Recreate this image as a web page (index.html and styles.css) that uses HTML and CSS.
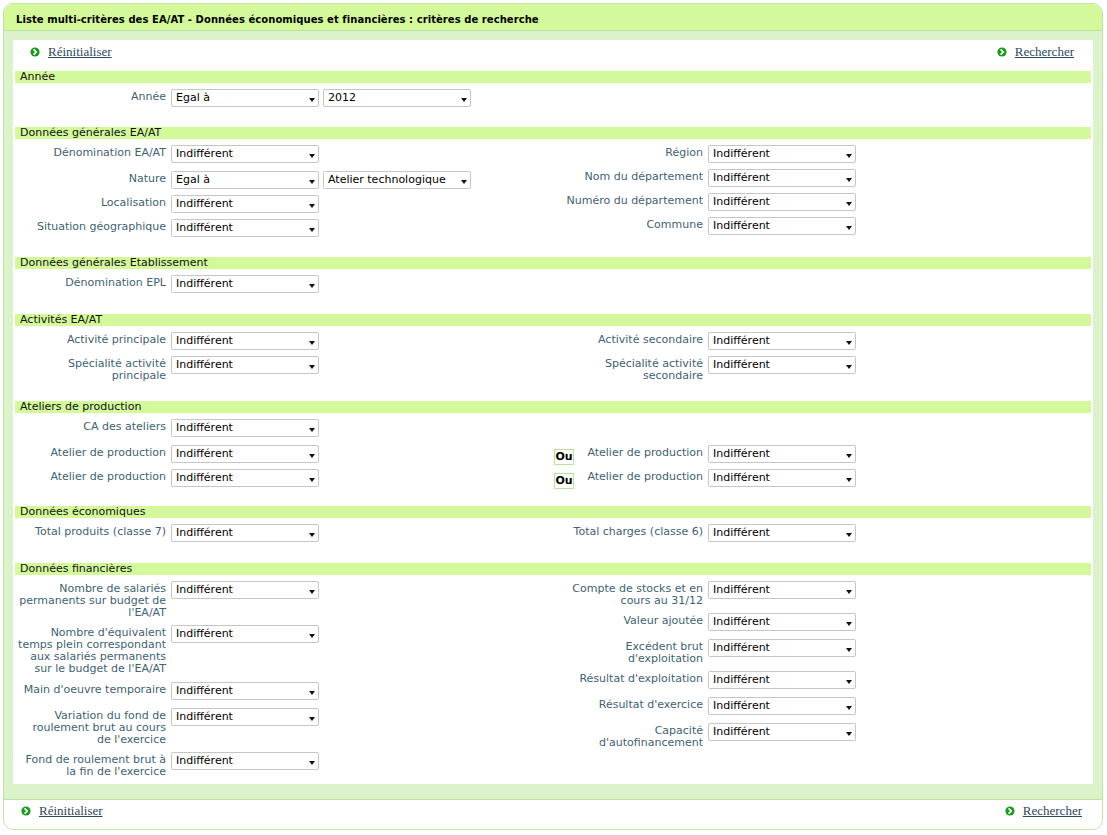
FILE: index.html
```html
<!DOCTYPE html>
<html lang="fr">
<head>
<meta charset="utf-8">
<title>Liste multi-critères des EA/AT</title>
<link rel="stylesheet" href="styles.css">
</head>
<body>
<div class="box">
  <div class="box-title">Liste multi-critères des EA/AT - Données économiques et financières : critères de recherche</div>
  <div class="box-body">
    <div class="panel">
      <div class="actions">
        <a class="action" href="#"><svg class="go" viewBox="0 0 10 10" width="10" height="10"><circle cx="5" cy="5" r="4.6" fill="#1a9a1c"/><path d="M3.6 2.4 L6.2 5 L3.6 7.6" fill="none" stroke="#fff" stroke-width="1.7"/></svg><span>Réinitialiser</span></a>
        <a class="action" href="#"><svg class="go" viewBox="0 0 10 10" width="10" height="10"><circle cx="5" cy="5" r="4.6" fill="#1a9a1c"/><path d="M3.6 2.4 L6.2 5 L3.6 7.6" fill="none" stroke="#fff" stroke-width="1.7"/></svg><span>Rechercher</span></a>
      </div>

      <section class="group">
        <h2 class="group-title">Année</h2>
        <div class="group-body">
          <div class="col">
            <div class="row"><label class="lbl">Année</label><div class="sel">Egal à</div><div class="sel">2012</div></div>
          </div>
        </div>
      </section>

      <section class="group">
        <h2 class="group-title">Données générales EA/AT</h2>
        <div class="group-body">
          <div class="col">
            <div class="row row--loose"><label class="lbl">Dénomination EA/AT</label><div class="sel">Indifférent</div></div>
            <div class="row"><label class="lbl">Nature</label><div class="sel">Egal à</div><div class="sel">Atelier technologique</div></div>
            <div class="row"><label class="lbl">Localisation</label><div class="sel">Indifférent</div></div>
            <div class="row"><label class="lbl">Situation géographique</label><div class="sel">Indifférent</div></div>
          </div>
          <div class="col">
            <div class="row"><label class="lbl">Région</label><div class="sel">Indifférent</div></div>
            <div class="row"><label class="lbl">Nom du département</label><div class="sel">Indifférent</div></div>
            <div class="row"><label class="lbl">Numéro du département</label><div class="sel">Indifférent</div></div>
            <div class="row"><label class="lbl">Commune</label><div class="sel">Indifférent</div></div>
          </div>
        </div>
      </section>

      <section class="group group--wide">
        <h2 class="group-title">Données générales Etablissement</h2>
        <div class="group-body">
          <div class="col">
            <div class="row"><label class="lbl">Dénomination EPL</label><div class="sel">Indifférent</div></div>
          </div>
        </div>
      </section>

      <section class="group group--tight">
        <h2 class="group-title">Activités EA/AT</h2>
        <div class="group-body">
          <div class="col">
            <div class="row"><label class="lbl">Activité principale</label><div class="sel">Indifférent</div></div>
            <div class="row"><label class="lbl">Spécialité activité principale</label><div class="sel">Indifférent</div></div>
          </div>
          <div class="col">
            <div class="row"><label class="lbl">Activité secondaire</label><div class="sel">Indifférent</div></div>
            <div class="row"><label class="lbl">Spécialité activité secondaire</label><div class="sel">Indifférent</div></div>
          </div>
        </div>
      </section>

      <section class="group group--tight">
        <h2 class="group-title">Ateliers de production</h2>
        <div class="group-body">
          <div class="col">
            <div class="row row--loose"><label class="lbl">CA des ateliers</label><div class="sel">Indifférent</div></div>
            <div class="row"><label class="lbl">Atelier de production</label><div class="sel">Indifférent</div></div>
            <div class="row"><label class="lbl">Atelier de production</label><div class="sel">Indifférent</div></div>
          </div>
          <div class="col">
            <div class="row row--blank"></div>
            <div class="row"><label class="lbl lbl--ou"><span class="ou">Ou</span><span class="lbl-text">Atelier de production</span></label><div class="sel">Indifférent</div></div>
            <div class="row"><label class="lbl lbl--ou"><span class="ou">Ou</span><span class="lbl-text">Atelier de production</span></label><div class="sel">Indifférent</div></div>
          </div>
        </div>
      </section>

      <section class="group group--wide">
        <h2 class="group-title">Données économiques</h2>
        <div class="group-body">
          <div class="col">
            <div class="row"><label class="lbl">Total produits (classe 7)</label><div class="sel">Indifférent</div></div>
          </div>
          <div class="col">
            <div class="row"><label class="lbl">Total charges (classe 6)</label><div class="sel">Indifférent</div></div>
          </div>
        </div>
      </section>

      <section class="group group--last">
        <h2 class="group-title">Données financières</h2>
        <div class="group-body">
          <div class="col">
            <div class="row"><label class="lbl">Nombre de salariés permanents sur budget de l'EA/AT</label><div class="sel">Indifférent</div></div>
            <div class="row row--plus1"><label class="lbl">Nombre d'équivalent temps plein correspondant aux salariés permanents sur le budget de l'EA/AT</label><div class="sel">Indifférent</div></div>
            <div class="row row--loose"><label class="lbl">Main d'oeuvre temporaire</label><div class="sel">Indifférent</div></div>
            <div class="row"><label class="lbl">Variation du fond de roulement brut au cours de l'exercice</label><div class="sel">Indifférent</div></div>
            <div class="row"><label class="lbl">Fond de roulement brut à la fin de l'exercice</label><div class="sel">Indifférent</div></div>
          </div>
          <div class="col">
            <div class="row"><label class="lbl">Compte de stocks et en cours au 31/12</label><div class="sel">Indifférent</div></div>
            <div class="row row--loose"><label class="lbl">Valeur ajoutée</label><div class="sel">Indifférent</div></div>
            <div class="row"><label class="lbl">Excédent brut d'exploitation</label><div class="sel">Indifférent</div></div>
            <div class="row row--loose"><label class="lbl">Résultat d'exploitation</label><div class="sel">Indifférent</div></div>
            <div class="row row--loose"><label class="lbl">Résultat d'exercice</label><div class="sel">Indifférent</div></div>
            <div class="row"><label class="lbl">Capacité d'autofinancement</label><div class="sel">Indifférent</div></div>
          </div>
        </div>
      </section>
    </div>
  </div>
  <div class="box-foot">
    <a class="action" href="#"><svg class="go" viewBox="0 0 10 10" width="10" height="10"><circle cx="5" cy="5" r="4.6" fill="#1a9a1c"/><path d="M3.6 2.4 L6.2 5 L3.6 7.6" fill="none" stroke="#fff" stroke-width="1.7"/></svg><span>Réinitialiser</span></a>
    <a class="action" href="#"><svg class="go" viewBox="0 0 10 10" width="10" height="10"><circle cx="5" cy="5" r="4.6" fill="#1a9a1c"/><path d="M3.6 2.4 L6.2 5 L3.6 7.6" fill="none" stroke="#fff" stroke-width="1.7"/></svg><span>Rechercher</span></a>
  </div>
</div>
</body>
</html>
```

FILE: styles.css
```css
* { box-sizing: border-box; }

html, body {
  margin: 0;
  padding: 0;
  background: #ffffff;
}

body {
  font-family: "DejaVu Sans", Verdana, sans-serif;
  font-size: 11px;
  color: #000;
}

.box {
  width: 1100px;
  margin: 3px 0 0 3px;
  border: 1px solid #bfe6a6;
  border-radius: 10px;
  overflow: hidden;
  background: #ffffff;
}

.box-title {
  background: #d3f99a;
  border-bottom: 1px solid #b9e39e;
  padding: 9px 0 3px 12px;
  height: 27px;
  line-height: 13px;
  font-size: 10px;
  letter-spacing: 0.06px;
  font-weight: bold;
  color: #000;
}

.box-body {
  background: #dbf2ca;
  padding: 9px 9px 15px 9px;
  border-bottom: 1px solid #b9e39e;
}

.panel {
  background: #ffffff;
  padding: 0 2px 3px 2px;
}

.actions {
  display: flex;
  justify-content: space-between;
  align-items: flex-start;
  height: 31px;
  padding: 4px 17px 0 15px;
}

.action {
  display: flex;
  align-items: center;
  gap: 8px;
  font-family: "Liberation Serif", "Times New Roman", serif;
  font-size: 13px;
  line-height: 16px;
  color: #2c4a5f;
  text-decoration: underline;
}

.go { display: block; flex: none; }

.group-title {
  margin: 0;
  height: 12px;
  line-height: 12px;
  padding-left: 5px;
  background: #d3f99a;
  font-size: 11px;
  font-weight: normal;
  color: #111;
}

.group { margin-bottom: 17px; }
.group--wide { margin-bottom: 18px; }
.group--tight { margin-bottom: 16px; }
.group--last { margin-bottom: 0; }

.group-body {
  display: grid;
  grid-template-columns: 537px 1fr;
  padding: 3px 0 0 1px;
}

.row {
  display: flex;
  align-items: flex-start;
  padding: 3px 0;
}

.row--loose { padding-bottom: 5px; }
.row--plus1 { padding-bottom: 4px; }
.row--blank { height: 26px; }

.lbl {
  flex: none;
  width: 150px;
  margin-right: 5px;
  padding-top: 2px;
  line-height: 12px;
  text-align: right;
  color: #406273;
}

.lbl--ou {
  display: flex;
  align-items: flex-start;
}

.lbl-text {
  flex: 1;
  text-align: right;
}

.ou {
  flex: none;
  width: 20px;
  height: 16px;
  margin: 2px 0 -6px 1px;
  border: 1px solid #b6e39c;
  font-weight: bold;
  color: #000;
  line-height: 14px;
  text-align: center;
}

.sel {
  position: relative;
  flex: none;
  width: 148px;
  height: 18px;
  border: 1px solid #c6c6c6;
  border-radius: 2px;
  background: #fff;
  padding-left: 4px;
  line-height: 16px;
  color: #000;
  white-space: nowrap;
}

.sel + .sel { margin-left: 4px; }

.sel::after {
  content: "";
  position: absolute;
  right: 3px;
  top: 8px;
  border-left: 3.5px solid transparent;
  border-right: 3.5px solid transparent;
  border-top: 4px solid #111;
}

.box-foot {
  display: flex;
  justify-content: space-between;
  align-items: flex-start;
  height: 29px;
  padding: 3px 20px 0 17px;
}
```
